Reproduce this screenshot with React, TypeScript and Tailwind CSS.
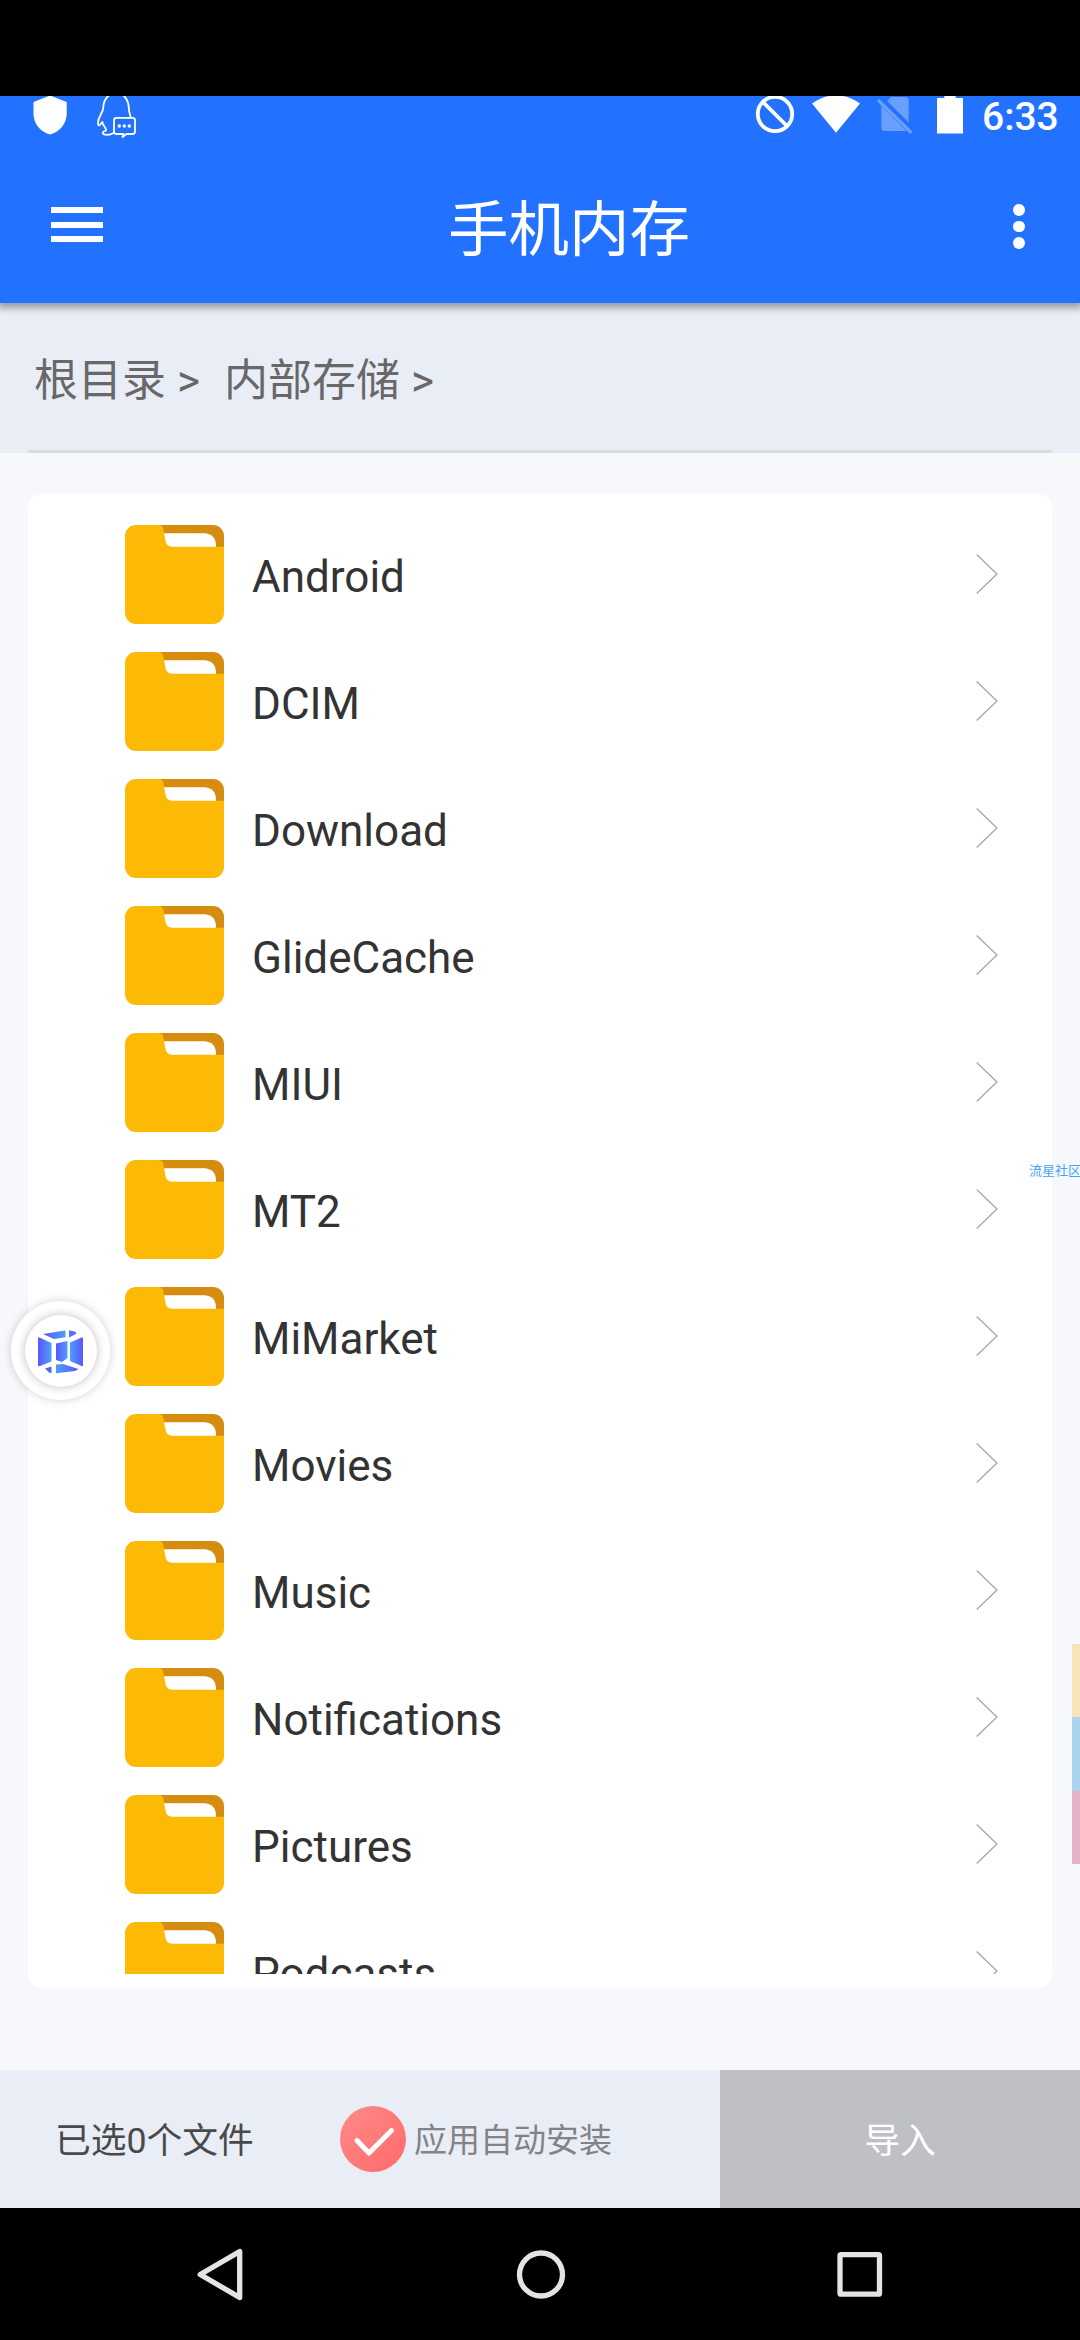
import type { ReactNode } from 'react';

const FOLDERS = [
  'Android',
  'DCIM',
  'Download',
  'GlideCache',
  'MIUI',
  'MT2',
  'MiMarket',
  'Movies',
  'Music',
  'Notifications',
  'Pictures',
  'Podcasts',
];

function FolderIcon() {
  return (
    <svg className="h-[99px] w-[99px] shrink-0" viewBox="0 0 99 99">
      <path d="M30 0H88A11 11 0 0 1 99 11V30H30Z" fill="#d68c0e" />
      <path d="M36 8.3H80Q91 9.500 91 21V24H36Z" fill="#fff" />
      <path
        d="M11 0H34Q37.500 0 38.400 4L40.300 15Q41.300 21.700 47 21.700H99V88A11 11 0 0 1 88 99H11A11 11 0 0 1 0 88V11A11 11 0 0 1 11 0Z"
        fill="#fcba06"
      />
    </svg>
  );
}

function ChevronIcon() {
  return (
    <svg className="mb-[2px] h-[40px] w-[22px] shrink-0" viewBox="0 0 22 40" fill="none" stroke="#a6a6a6" strokeWidth="1.3">
      <path d="M0.700 0.500L21 20L0.700 39.500" />
    </svg>
  );
}

function StatusBar() {
  return (
    <div className="flex h-[44px] items-start text-white">
      <svg className="h-[44px] w-[150px]" viewBox="0 0 150 44" fill="none">
        <path d="M50 -0.500L66.700 6V18C66.700 27 60 36 50 38.500C40 36 33.500 27 33.500 18V6Z" fill="#fff" />
        <g stroke="#fff" strokeWidth="1.800" strokeLinejoin="round" strokeLinecap="round">
          <path d="M130.500 20.500C129.800 17 128.800 16 128.800 12C128.500 3.500 123.500 -3 116.200 -3C108.500 -3 103.500 4 103.300 11.500C103.300 17 98 20 98 27C98 30.500 99.500 30 102.300 26C103 30.500 106.500 31.500 106 34.500C101 36 102 38.800 107.500 38.800C110.500 38.800 112 38 113.500 37" />
          <path d="M116.500 21.800H132.500Q135 21.800 135 24.300V35.500Q135 38 132.500 38H126.500L122.500 41L123.500 38H116.500Q114 38 114 35.500V24.300Q114 21.800 116.500 21.800Z" />
        </g>
        <g fill="#fff">
          <circle cx="119.300" cy="30" r="1.700" />
          <circle cx="124.300" cy="30" r="1.700" />
          <circle cx="129.300" cy="30" r="1.700" />
        </g>
      </svg>
      <svg className="ml-[600px] h-[44px] w-[234px] shrink-0" viewBox="750 0 234 44" fill="none">
        <circle cx="775" cy="18" r="17.200" stroke="#fff" strokeWidth="3.800" />
        <path d="M763 6L787 30" stroke="#fff" strokeWidth="3.800" />
        <path d="M812 7.500Q836 -9 860 7.500L836 36.700Z" fill="#fff" />
        <g fill="#fff" opacity="0.320">
          <path d="M891 1H905Q908.700 1 908.700 4.500V26.500L887 5Z" />
          <path d="M881.300 10L906.500 35H885Q881.300 35 881.300 31.500Z" />
          <path d="M876.700 5L879 2.800L912.500 35.500L910.200 38Z" />
        </g>
        <path d="M944.300 0H955.700V2H963V37.500H937V2H944.300Z" fill="#fff" />
      </svg>
      <span className="-ml-[2px] text-[39px] leading-[42px] font-medium whitespace-nowrap">6:33</span>
    </div>
  );
}

function TopBar() {
  return (
    <header className="z-10 h-[207px] bg-[#2272ff] shadow-[0_3px_7px_2px_rgba(0,0,0,0.35)]">
      <StatusBar />
      <div className="flex h-[163px] items-start justify-between">
        <div className="ml-[51px] mt-[67px] flex flex-col gap-[8.600px]">
          <div className="h-[6px] w-[52px] bg-white" />
          <div className="h-[6px] w-[52px] bg-white" />
          <div className="h-[6px] w-[52px] bg-white" />
        </div>
        <h1 className="ml-[22px] mt-[51px] text-[60.500px] leading-[80px] text-white">手机内存</h1>
        <div className="mr-[55px] mt-[64px] flex flex-col gap-[5px]">
          <div className="h-[11.500px] w-[12px] rounded-full bg-white" />
          <div className="h-[11.500px] w-[12px] rounded-full bg-white" />
          <div className="h-[11.500px] w-[12px] rounded-full bg-white" />
        </div>
      </div>
    </header>
  );
}

function Breadcrumb() {
  return (
    <nav className="flex h-[150px] flex-col justify-between bg-[#e9eef6]">
      <div className="flex pl-[34px] pt-[48px] text-[44px] leading-[60px] text-[#686868]">
        <span className="w-[190px] whitespace-pre">根目录 &gt;</span>
        <span className="whitespace-pre">内部存储 &gt;</span>
      </div>
      <div className="mx-7 h-[3px] bg-[#dcdcdc]" />
    </nav>
  );
}

function FolderRow({ name }: { name: string }) {
  return (
    <li className="flex h-[127px] shrink-0 items-center pl-[97px] pr-[54px]">
      <FolderIcon />
      <span className="ml-[28px] mt-[4px] flex-1 text-[44px] leading-[56px] text-[#333]">{name}</span>
      <ChevronIcon />
    </li>
  );
}

function BottomBar() {
  return (
    <footer className="flex h-[138px] bg-[#e9eef6]">
      <div className="flex w-[720px] items-center">
        <span className="ml-[55px] mt-[4px] w-[285px] text-[35.750px] leading-[48px] text-[#4a4a4a]">已选0个文件</span>
        <svg className="h-[66px] w-[66px]" viewBox="0 0 66 66" fill="none">
          <defs>
            <linearGradient id="check" x1="0" y1="0" x2="1" y2="1">
              <stop offset="0" stopColor="#ff8a8a" />
              <stop offset="1" stopColor="#ff6a6a" />
            </linearGradient>
          </defs>
          <circle cx="33" cy="33" r="33" fill="url(#check)" />
          <path d="M17 34.500L29 47L51.500 24.500" stroke="#fff" strokeWidth="5" strokeLinecap="round" strokeLinejoin="round" />
        </svg>
        <span className="ml-[8px] mt-[4px] text-[33px] leading-[48px] text-[#828387]">应用自动安装</span>
      </div>
      <button className="flex-1 bg-[#bfc0c5] pt-[4px] text-[35.750px] leading-[48px] text-white">导入</button>
    </footer>
  );
}

function NavButton({ children }: { children: ReactNode }) {
  return (
    <svg className="h-[56px] w-[56px]" viewBox="0 0 56 56" fill="none" stroke="#e4e4e4" strokeWidth="5.300" strokeLinejoin="round">
      {children}
    </svg>
  );
}

function SystemNav() {
  return (
    <div className="flex h-[132px] items-start gap-[263px] bg-black pl-[193px] pt-[38px]">
      <NavButton>
        <path d="M7.200 28.500L46.700 5.500V51.500Z" />
      </NavButton>
      <NavButton>
        <circle cx="29" cy="28.500" r="21.500" />
      </NavButton>
      <NavButton>
        <rect x="9" y="8.700" width="39.500" height="39.500" rx="1" />
      </NavButton>
    </div>
  );
}

function FloatingBall() {
  return (
    <div className="absolute left-[11px] top-[1301px] flex h-[99px] w-[99px] items-center justify-center rounded-full bg-white shadow-[0_0_10px_rgba(0,0,0,0.18)]">
      <div className="flex h-[72px] w-[72px] items-center justify-center rounded-full bg-white shadow-[0_0_10px_rgba(0,0,0,0.26)]">
        <svg className="mt-[3px] h-[45px] w-[45px]" viewBox="0 0 45 45">
          <defs>
            <linearGradient id="cube" x1="0" y1="0" x2="1" y2="0">
              <stop offset="0" stopColor="#5c55fa" />
              <stop offset="1" stopColor="#4ba0fb" />
            </linearGradient>
            <linearGradient id="cubeRight" x1="0" y1="0" x2="1" y2="0">
              <stop offset="0" stopColor="#4ba0fb" />
              <stop offset="1" stopColor="#5c55fa" />
            </linearGradient>
          </defs>
          <path d="M0.500 8Q0 7 1.500 7.500L13.500 13V31.500L2 36Q0 37 0 35V8Z" fill="url(#cube)" />
          <path d="M32 12.500L43.500 7.500Q45 7 45 8.500V35Q45 37 43.500 36L32 31Z" fill="url(#cubeRight)" />
          <path d="M5 4L22 1.200L27.500 0.500V7.300L16 9Z" fill="url(#cube)" />
          <path d="M31 0.300L36.500 1.500Q39 2.500 38 4L31 7.500Z" fill="#5272fb" />
          <path d="M18 13.500L29.500 11V28L24 32L18 30Z" fill="url(#cube)" />
          <path d="M7 38.500L13.500 36.500V43L11 42.500Z" fill="#5364fb" />
          <path d="M18 34.500L25 34L40.500 39L37 41L18 43.300Z" fill="url(#cubeRight)" />
        </svg>
      </div>
    </div>
  );
}

export default function App() {
  return (
    <div className="relative flex h-[2340px] w-[1080px] flex-col overflow-hidden bg-[#f6f8fc] font-[Roboto,'Noto_Sans_CJK_SC',sans-serif]">
      <div className="z-20 h-[96px] shrink-0 bg-black" />
      <TopBar />
      <Breadcrumb />
      <main className="flex-1 px-7 pt-[41px]">
        <div className="h-[1494px] rounded-[14px] bg-white pt-[17px] pb-[14px]">
          <ul className="flex h-full flex-col overflow-hidden">
            {FOLDERS.map(name => (
              <FolderRow key={name} name={name} />
            ))}
          </ul>
        </div>
      </main>
      <BottomBar />
      <SystemNav />

      <FloatingBall />
      <div className="absolute left-[1029px] top-[1161px] text-[13px] leading-[20px] whitespace-nowrap text-[#45a5f5]">流星社区</div>
      <div className="absolute right-0 top-[1644px] flex h-[220px] w-[8px] flex-col">
        <div className="flex-1 bg-[#f7e5b8]" />
        <div className="flex-1 bg-[#aad4ee]" />
        <div className="flex-1 bg-[#e5b2ca]" />
      </div>
    </div>
  );
}
